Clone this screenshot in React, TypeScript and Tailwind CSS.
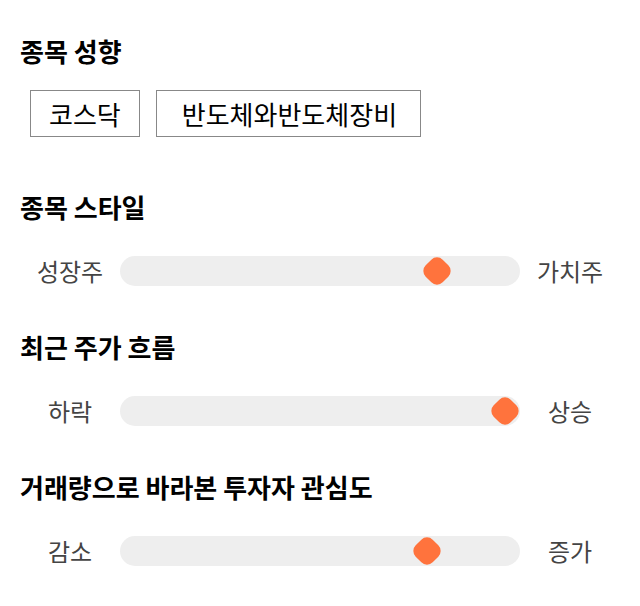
const font = { fontFamily: '"Noto Sans CJK KR", "Noto Sans", sans-serif' };

interface Style {
    title: string;
    left: string;
    right: string;
    offset: number; // thumb left, px inside the track
}

const styles: Style[] = [
    { title: '종목 스타일', left: '성장주', right: '가치주', offset: 303 },
    { title: '최근 주가 흐름', left: '하락', right: '상승', offset: 371 },
    { title: '거래량으로 바라본 투자자 관심도', left: '감소', right: '증가', offset: 293 },
];

const tags = [
    { label: '코스닥', pad: 'px-[18px]' },
    { label: '반도체와반도체장비', pad: 'pl-[25px] pr-[23px]' },
];

function Slider({ item }: { item: Style }) {
    return (
        <div className="flex items-center mt-[32px] h-[30px]">
            <span className="w-[100px] text-center text-[24px] leading-[30px] text-[#444]">{item.left}</span>
            <div className="relative flex-1 h-[30px] rounded-full bg-[#eeeeee]">
                <div
                    className="absolute top-[3px] w-[24px] h-[24px] rotate-45 rounded-[8px] bg-[#ff733d]"
                    style={{ left: item.offset + 2 }}
                />
            </div>
            <span className="w-[100px] text-center text-[24px] leading-[30px] text-[#444]">{item.right}</span>
        </div>
    );
}

export default function App() {
    return (
        <div className="w-[640px] h-[606px] bg-white px-[20px] pt-[34px]" style={font}>
            <h2 className="text-[26px] font-bold text-black leading-[34px]">종목 성향</h2>
            <div className="flex gap-[16px] mt-[22px] ml-[10px]">
                {tags.map((t) => (
                    <div
                        key={t.label}
                        className={`${t.pad} h-[47px] flex items-center border border-[#888] text-[26px] leading-[34px] text-black`}
                    >
                        {t.label}
                    </div>
                ))}
            </div>

            {styles.map((s, i) => (
                <div key={s.title} className={i === 0 ? 'mt-[53px]' : 'mt-[44px]'}>
                    <h2 className="text-[26px] font-bold text-black leading-[34px]">{s.title}</h2>
                    <Slider item={s} />
                </div>
            ))}
        </div>
    );
}
